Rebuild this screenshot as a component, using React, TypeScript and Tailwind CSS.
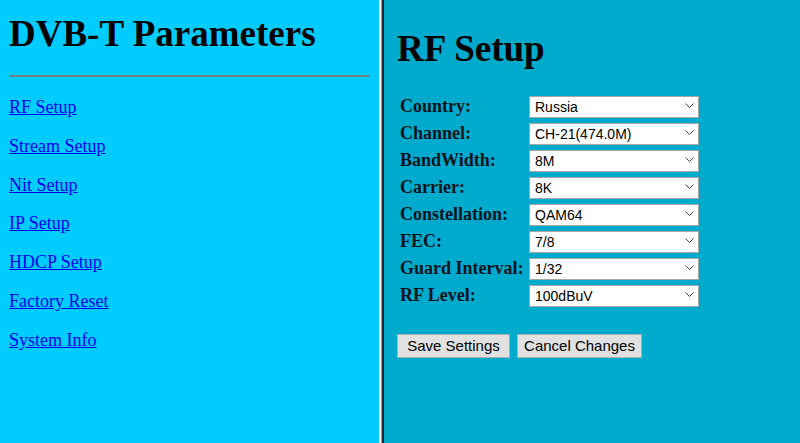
import { type JSX } from 'react';

const navLinks = [
  'RF Setup',
  'Stream Setup',
  'Nit Setup',
  'IP Setup',
  'HDCP Setup',
  'Factory Reset',
  'System Info',
];

const fields: { label: string; value: string }[] = [
  { label: 'Country:', value: 'Russia' },
  { label: 'Channel:', value: 'CH-21(474.0M)' },
  { label: 'BandWidth:', value: '8M' },
  { label: 'Carrier:', value: '8K' },
  { label: 'Constellation:', value: 'QAM64' },
  { label: 'FEC:', value: '7/8' },
  { label: 'Guard Interval:', value: '1/32' },
  { label: 'RF Level:', value: '100dBuV' },
];

const serif = "font-['Liberation_Serif','Times_New_Roman',serif]";
const sans = "font-['Liberation_Sans',Arial,sans-serif]";

function Chevron(): JSX.Element {
  return (
    <svg
      width="9"
      height="5"
      viewBox="0 0 9 5"
      className="pointer-events-none absolute right-[5px] top-[9px]"
    >
      <path d="M0.5 0.5 L4.5 4.5 L8.5 0.5" fill="none" stroke="#444" strokeWidth="1" />
    </svg>
  );
}

function FieldRow({ label, value }: { label: string; value: string }): JSX.Element {
  return (
    <div className="flex h-[27px] items-center">
      <span className={`ml-[3px] mt-[3px] w-[129px] text-[18px] font-bold text-[#06121c] ${serif}`}>
        {label}
      </span>
      <div className="relative h-[22px] w-[170px]">
        <select
          defaultValue={value}
          className={`h-full w-full appearance-none border border-[#a6a6a6] bg-white pl-[5px] text-[14px] text-black outline-none ${sans}`}
        >
          <option value={value}>{value}</option>
        </select>
        <Chevron />
      </div>
    </div>
  );
}

function Sidebar(): JSX.Element {
  return (
    <aside className={`h-full w-[379px] shrink-0 bg-[#00ccff] px-[9px] ${serif}`}>
      <h1 className="pt-[13px] text-[37px] font-bold leading-[42px] text-black">DVB-T Parameters</h1>
      <hr className="mt-[20px] w-[361px] border-0 border-t-2 border-[#6f7f86]" />
      <nav className="mt-[20px] flex flex-col gap-[17.8px]">
        {navLinks.map((l) => (
          <a key={l} href="#" className="text-[18px] leading-[21px] text-[#0000ee] underline">
            {l}
          </a>
        ))}
      </nav>
    </aside>
  );
}

export default function App(): JSX.Element {
  return (
    <div className="flex h-[443px] w-[800px] overflow-hidden">
      <Sidebar />
      <div className="h-full w-[2px] bg-white" />
      <div className="h-full w-[1px] bg-[#a0a0a0]" />
      <div className="h-full w-[2px] bg-[#1e2a33]" />
      <main className="h-full flex-1 bg-[#00aacc] pl-[13px]">
        <h2 className={`pt-[28px] text-[37px] font-bold leading-[42px] text-black ${serif}`}>RF Setup</h2>
        <section className="mt-[21px] flex flex-col">
          {fields.map((f) => (
            <FieldRow key={f.label} label={f.label} value={f.value} />
          ))}
        </section>
        <div className="mt-[27px] flex gap-[7px]">
          <button
            type="button"
            className={`h-[24px] w-[113px] border border-[#adadad] bg-[#e1e1e1] text-[15px] text-black ${sans}`}
          >
            Save Settings
          </button>
          <button
            type="button"
            className={`h-[24px] w-[125px] border border-[#adadad] bg-[#e1e1e1] text-[15px] text-black ${sans}`}
          >
            Cancel Changes
          </button>
        </div>
      </main>
    </div>
  );
}
